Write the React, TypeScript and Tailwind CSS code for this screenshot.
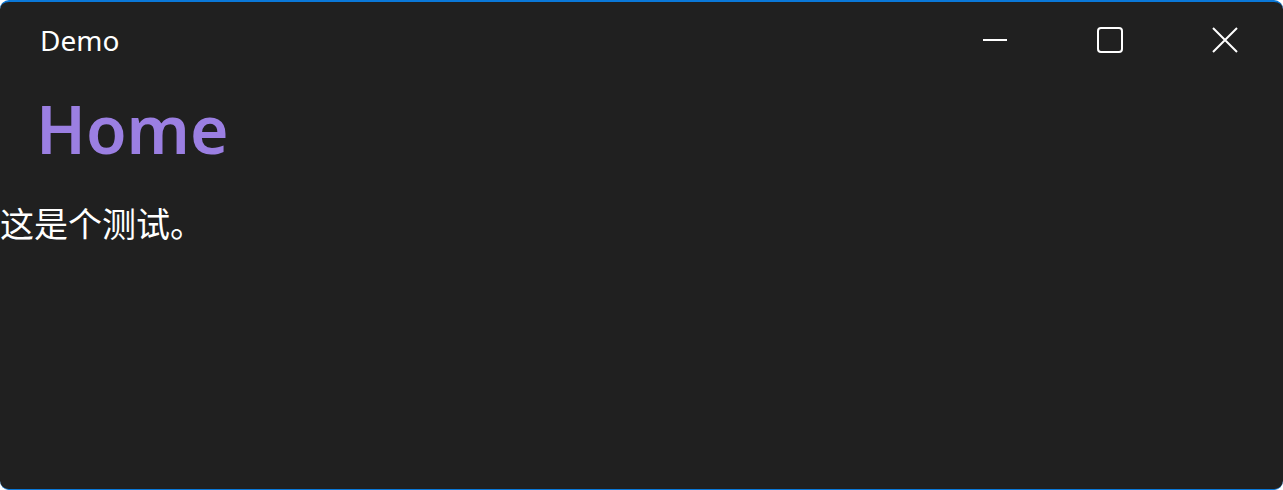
export default function App() {
  return (
    <div className="h-[490px] w-[1283px] bg-white">
      <div
        className="flex h-full w-full flex-col overflow-hidden rounded-[9px] border-t-2 border-b border-[#0a78d8] bg-[#202020] text-white"
        style={{ fontFamily: '"Noto Sans", "Noto Sans CJK SC", sans-serif' }}
      >
        {/* title bar */}
        <div className="flex h-[76px] items-center">
          <div className="flex-1 pl-[40px] text-[28px] leading-none">Demo</div>
          <div className="flex h-full pr-[1px]">
            <button className="flex w-[115px] items-center justify-center">
              <svg width="26" height="26" viewBox="0 0 26 26">
                <line x1="1" y1="13" x2="25" y2="13" stroke="white" strokeWidth="2" />
              </svg>
            </button>
            <button className="flex w-[115px] items-center justify-center">
              <svg width="26" height="26" viewBox="0 0 26 26">
                <rect x="1" y="1" width="24" height="24" rx="3" fill="none" stroke="white" strokeWidth="2" />
              </svg>
            </button>
            <button className="flex w-[115px] items-center justify-center">
              <svg width="26" height="26" viewBox="0 0 26 26">
                <path d="M1 1L25 25M25 1L1 25" stroke="white" strokeWidth="2" />
              </svg>
            </button>
          </div>
        </div>
        {/* content */}
        <div className="mt-[10px] pl-[36px] text-[66px] leading-[80px] font-semibold text-[#9b7fe2]">Home</div>
        <div className="mt-[34px] text-[34px] leading-[44px]">这是个测试。</div>
      </div>
    </div>
  );
}
